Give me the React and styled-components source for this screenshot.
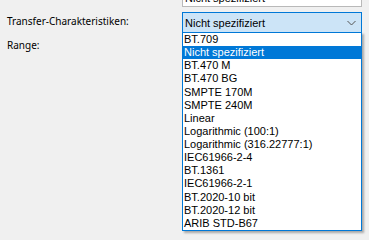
import React from "react";
import styled, { createGlobalStyle, css } from "styled-components";

const GlobalStyle = createGlobalStyle`
  html, body {
    margin: 0;
    padding: 0;
    background: #f0f0f0;
    overflow: hidden;
  }
  body {
    font-family: "Noto Sans", "Open Sans", sans-serif;
    font-size: 10px;
    color: #000;
  }
`;

const Page = styled.div`
  position: relative;
  display: flex;
  flex-direction: column;
  width: 369px;
  height: 239px;
  padding-left: 7px;
  box-sizing: border-box;
  overflow: hidden;
`;

const Form = styled.div`
  display: flex;
  flex-direction: column;
  margin-top: -12px;
`;

const Row = styled.div`
  display: flex;
  align-items: flex-start;
  margin-top: ${({ gap }) => gap || 0}px;
  height: ${({ h }) => h || 21}px;
`;

const Label = styled.div`
  width: 175px;
  line-height: 14px;
  padding-top: ${({ top }) => top || 0}px;
  white-space: nowrap;
`;

const Combo = styled.div`
  display: flex;
  align-items: center;
  justify-content: space-between;
  width: 180px;
  height: ${({ h }) => h || 21}px;
  box-sizing: border-box;
  padding: 0 5px 0 2px;
  background: #fff;
  border: 1px solid #b9b9b9;
  line-height: 14px;
  font-family: "Liberation Sans", Arial, sans-serif;
  font-size: 11px;

  ${({ focused }) =>
    focused &&
    css`
      background: #cce4f7;
      border-color: #0078d7;
    `}
`;

const Chevron = () => (
  <svg width="9" height="6" viewBox="0 0 9 6">
    <path d="M0.5 1 L4.5 5 L8.5 1" fill="none" stroke="#555" strokeWidth="1" />
  </svg>
);

const List = styled.ul`
  position: absolute;
  left: 182px;
  top: 32px;
  width: 180px;
  margin: 0;
  padding: 0;
  list-style: none;
  box-sizing: border-box;
  background: #fff;
  border: 1px solid #0078d7;
  box-shadow: 2px 2px 2px rgba(0, 0, 0, 0.3);
  font-family: "Liberation Sans", Arial, sans-serif;
  font-size: 11px;
`;

const Item = styled.li`
  height: 13.13px;
  line-height: 13px;
  padding-left: 1px;
  white-space: nowrap;
  background: ${({ selected }) => (selected ? "#0078d7" : "transparent")};
  color: ${({ selected }) => (selected ? "#fff" : "#000")};
`;

const options = [
  "BT.709",
  "Nicht spezifiziert",
  "BT.470 M",
  "BT.470 BG",
  "SMPTE 170M",
  "SMPTE 240M",
  "Linear",
  "Logarithmic (100:1)",
  "Logarithmic (316.22777:1)",
  "IEC61966-2-4",
  "BT.1361",
  "IEC61966-2-1",
  "BT.2020-10 bit",
  "BT.2020-12 bit",
  "ARIB STD-B67",
];

export default function App() {
  return (
    <Page>
      <GlobalStyle />
      <Form>
        <Row h={18}>
          <Label />
          <Combo h={19}>
            <span>Nicht spezifiziert</span>
            <Chevron />
          </Combo>
        </Row>
        <Row gap={6}>
          <Label top={2}>Transfer-Charakteristiken:</Label>
          <Combo focused>
            <span>Nicht spezifiziert</span>
            <Chevron />
          </Combo>
        </Row>
        <Row gap={5}>
          <Label>Range:</Label>
        </Row>
      </Form>
      <List>
        {options.map((o) => (
          <Item key={o} selected={o === "Nicht spezifiziert"}>
            {o}
          </Item>
        ))}
      </List>
    </Page>
  );
}
